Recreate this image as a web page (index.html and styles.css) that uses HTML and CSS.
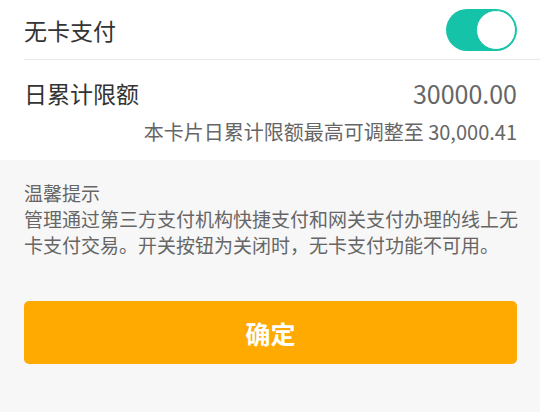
FILE: index.html
```html
<!DOCTYPE html>
<html lang="zh-CN">
<head>
<meta charset="utf-8">
<link rel="stylesheet" href="styles.css">
</head>
<body>
<div class="card">
  <div class="row row-switch">
    <span class="label">无卡支付</span>
    <span class="toggle"><span class="knob"></span></span>
  </div>
  <div class="limit">
    <div class="row row-limit">
      <span class="label">日累计限额</span>
      <span class="amount">30000.00</span>
    </div>
    <div class="hint">本卡片日累计限额最高可调整至 30,000.41</div>
  </div>
</div>
<div class="tips">
  <div class="tips-title">温馨提示</div>
  <p class="tips-text">管理通过第三方支付机构快捷支付和网关支付办理的线上无卡支付交易。开关按钮为关闭时，无卡支付功能不可用。</p>
</div>
<div class="actions">
  <button class="btn">确定</button>
</div>
</body>
</html>
```

FILE: styles.css
```css
html, body {
  margin: 0;
  padding: 0;
}
body {
  background: #f7f7f7;
  font-family: "Noto Sans CJK SC", "Noto Sans", sans-serif;
  width: 540px;
  height: 412px;
  overflow: hidden;
}
.card {
  background: #ffffff;
  padding-left: 24px;
}
.row {
  display: flex;
  align-items: center;
  justify-content: space-between;
  padding-right: 23px;
}
.row-switch {
  height: 59px;
  border-bottom: 1px solid #e8e8e8;
}
.label {
  font-size: 23px;
  color: #333333;
}
.toggle {
  width: 71px;
  height: 42px;
  border-radius: 21px;
  background: #14c3a8;
  display: flex;
  justify-content: flex-end;
  align-items: center;
  box-sizing: border-box;
  padding: 1px;
}
.knob {
  width: 40px;
  height: 40px;
  border-radius: 50%;
  background: #ffffff;
  box-sizing: border-box;
  border: 1px solid #14c3a8;
}
.limit {
  height: 100px;
  padding-right: 23px;
  display: flex;
  flex-direction: column;
}
.row-limit {
  padding-right: 0;
  padding-top: 4px;
  height: 58px;
}
.amount {
  font-size: 25px;
  color: #666666;
}
.hint {
  text-align: right;
  font-size: 20px;
  color: #666666;
  line-height: 20px;
}
.tips {
  padding: 20px 22px 0 24px;
  color: #666666;
  font-size: 19px;
}
.tips-title {
  line-height: 26px;
}
.tips-text {
  margin: 0;
  line-height: 26px;
}
.actions {
  padding: 43px 23px 0 24px;
}
.btn {
  display: block;
  width: 100%;
  height: 63px;
  border: none;
  border-radius: 5px;
  background: #ffaa00;
  color: #ffffff;
  font-family: "Noto Sans CJK SC", sans-serif;
  font-size: 25px;
  font-weight: bold;
}
```
